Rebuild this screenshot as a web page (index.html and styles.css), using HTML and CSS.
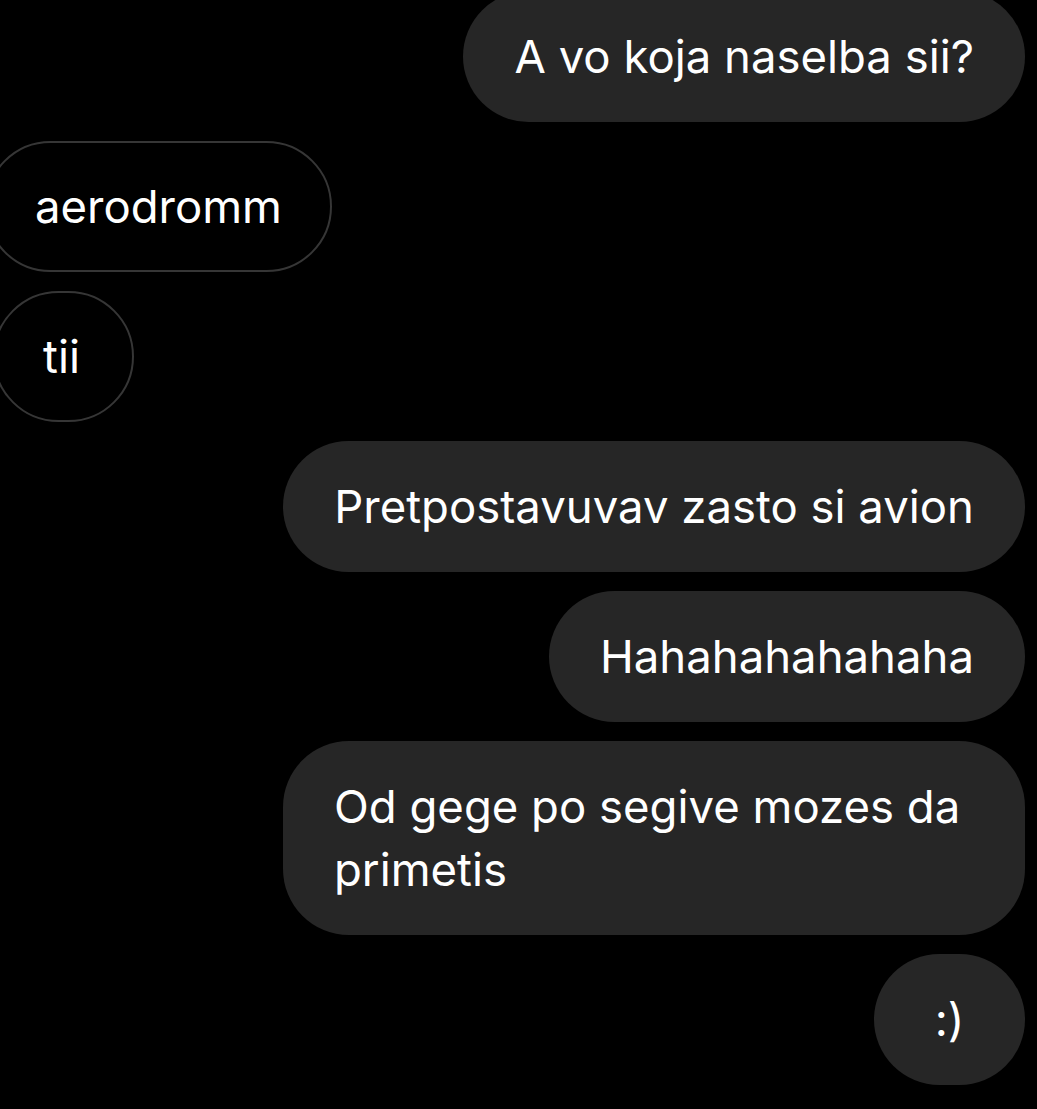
FILE: index.html
```html
<!DOCTYPE html>
<html lang="mk">
<head>
    <meta charset="UTF-8">
    <title>chat</title>
    <link rel="stylesheet" href="styles.css">
</head>
<body>
<!-- thread -->
<ul class="thread">
    <li class="msg me"><p class="bubble">A vo koja naselba sii?</p></li>
    <li class="msg them"><p class="bubble aero">aerodromm</p></li>
    <li class="msg them"><p class="bubble tii">tii</p></li>
    <li class="msg me"><p class="bubble">Pretpostavuvav zasto si avion</p></li>
    <li class="msg me"><p class="bubble">Hahahahahahaha</p></li>
    <li class="msg me"><p class="bubble wide">Od gege po segive mozes da primetis</p></li>
    <li class="msg me"><p class="bubble smile">:)</p></li>
</ul>
</body>
</html>
```

FILE: styles.css
```css
*{
    margin: 0;
    padding: 0;
    list-style: none;
    box-sizing: border-box;
}
html, body{
    background: #000;
    height: 100%;
    overflow: hidden;
}
body{
    font-family: Inter, "Liberation Sans", sans-serif;
    color: #fff;
}
.thread{
    display: flex;
    flex-direction: column;
    gap: 19px;
    margin-top: -9px;
    padding-right: 12px;
}
.msg{
    display: flex;
}
.msg.me{
    justify-content: flex-end;
}
.bubble{
    font-size: 45.5px;
    line-height: 63px;
    padding: 34px 51px;
    border-radius: 66px;
}
.me .bubble{
    background: #262626;
}
.them .bubble{
    border: 2px solid #363636;
    padding: 32px 48px;
}
.aero{
    margin-left: -15px;
}
.tii{
    margin-left: -7px;
    min-width: 141px;
}
.wide{
    width: 742px;
    padding-right: 40px;
}
.smile{
    min-width: 151px;
    text-align: center;
}
```
